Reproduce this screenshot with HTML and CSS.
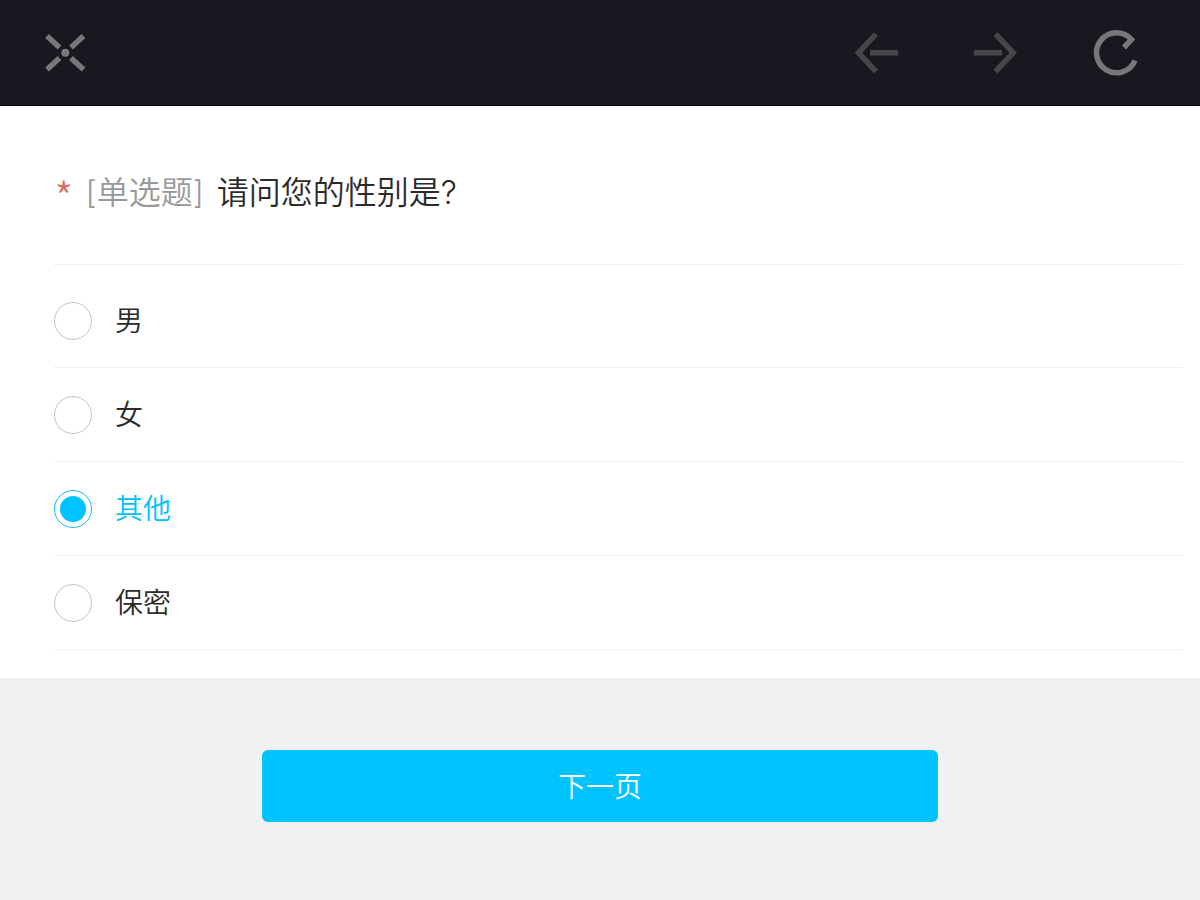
FILE: index.html
```html
<!DOCTYPE html>
<html lang="zh-CN">
<head>
    <meta charset="UTF-8">
    <meta name="viewport" content="width=device-width, initial-scale=1.0">
    <title>问卷</title>
    <link rel="stylesheet" href="styles.css">
</head>
<body>
    <header class="toolbar">
        <button type="button" class="icon-btn" aria-label="关闭">
            <svg width="48" height="48" viewBox="0 0 48 48" fill="none" stroke="#78787b" stroke-width="5.5">
                <path d="M6 7 18.5 18.5M42.5 7 30 18.5M6 40.5 18.5 29M42.5 40.5 30 29"/>
                <circle cx="24.3" cy="23.8" r="4" fill="#78787b" stroke="none"/>
            </svg>
        </button>
        <div class="nav">
            <button type="button" class="icon-btn" aria-label="后退">
                <svg width="48" height="48" viewBox="0 0 48 48" fill="none" stroke="#464649" stroke-width="5.5">
                    <path d="M24 5 6.5 23.8 24 42.500M18 23.800H46"/>
                </svg>
            </button>
            <button type="button" class="icon-btn" aria-label="前进">
                <svg width="48" height="48" viewBox="0 0 48 48" fill="none" stroke="#464649" stroke-width="5.5">
                    <path d="M23.5 5 41.2 23.8 23.5 42.5M30 23.8H2"/>
                </svg>
            </button>
            <button type="button" class="icon-btn" aria-label="刷新">
                <svg width="48" height="48" viewBox="0 0 48 48" fill="none" stroke="#78787b" stroke-width="5.5">
                    <path d="M32 18.5 39.5 10.5A20 20 0 1 0 43 31.5"/>
                </svg>
            </button>
        </div>
    </header>

    <form id="survey">
        <div class="panel">
            <fieldset class="question">
                <legend class="title"><span class="required">*</span><span class="type">[单选题]</span> 请问您的性别是?</legend>
                <div class="options">
                    <label class="option"><input type="radio" name="gender" value="male"><span>男</span></label>
                    <label class="option"><input type="radio" name="gender" value="female"><span>女</span></label>
                    <label class="option"><input type="radio" name="gender" value="other" checked><span>其他</span></label>
                    <label class="option"><input type="radio" name="gender" value="secret"><span>保密</span></label>
                </div>
            </fieldset>
        </div>
        <div class="footer">
            <button type="button" class="next-btn">下一页</button>
        </div>
    </form>
</body>
</html>
```
FILE: styles.css
```css
* {
    box-sizing: border-box;
}
body {
    margin: 0;
    background-color: #f1f1f1;
    color: #2b2b2b;
    font-family: Inter, "Noto Sans CJK SC", sans-serif;
    font-size: 28px;
    font-weight: 350;
}
.toolbar {
    display: flex;
    justify-content: space-between;
    align-items: center;
    height: 106px;
    padding: 0 60px 0 41px;
    background-color: #181820;
    border-bottom: 1px solid #08080c;
}
.nav {
    display: flex;
    gap: 72px;
}
.icon-btn {
    display: block;
    padding: 0;
    border: none;
    background: none;
    cursor: pointer;
}
.icon-btn svg {
    display: block;
}
.panel {
    padding: 63px 17px 28px 54px;
    background-color: #fff;
}
.question {
    min-width: 0;
    margin: 0;
    padding: 0;
    border: none;
}
.title {
    display: block;
    width: 100%;
    padding: 0 0 47px;
    font-size: 32px;
    line-height: 48px;
}
.required {
    margin-right: 12px;
    color: #e2675e;
    font-family: "Noto Sans CJK SC", sans-serif;
    font-size: 44px;
    font-weight: 300;
    line-height: 0;
    vertical-align: -11px;
}
.type {
    margin-right: 4px;
    color: #999;
}
.options {
    padding-top: 9px;
    border-top: 1px solid #efefef;
}
.option {
    display: flex;
    align-items: center;
    gap: 23px;
    height: 94px;
    border-bottom: 1px solid #efefef;
    line-height: 40px;
    cursor: pointer;
}
.option input {
    appearance: none;
    width: 38px;
    height: 38px;
    margin: 0;
    padding: 5px;
    border: 1px solid #c4c4c4;
    border-radius: 50%;
    background-color: #fff;
}
.option input:checked {
    border-color: #1bb8ee;
    background-color: #00c3ff;
    background-clip: content-box;
}
.option input:checked + span {
    color: #00c0fb;
}
.footer {
    display: flex;
    justify-content: center;
    padding: 72px 20px;
}
.next-btn {
    width: 100%;
    max-width: 676px;
    height: 72px;
    padding: 0 0 2px;
    border: none;
    border-radius: 6px;
    background-color: #00c3ff;
    color: #fff;
    font-family: inherit;
    font-size: 28px;
    font-weight: 350;
    cursor: pointer;
}
```
